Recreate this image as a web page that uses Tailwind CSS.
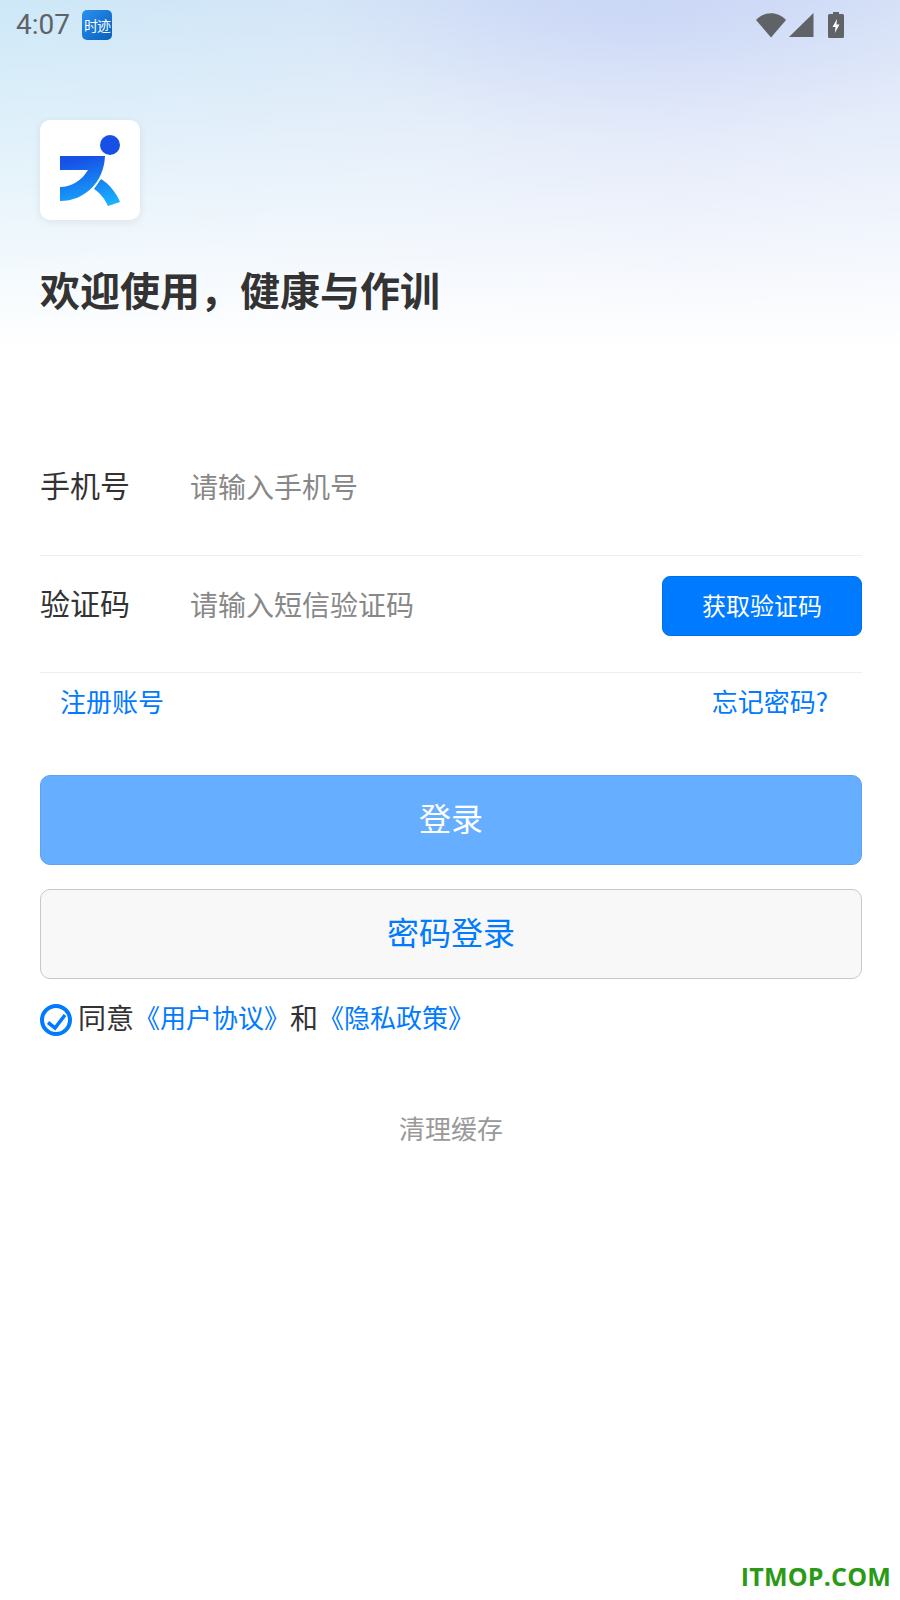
<!DOCTYPE html>
<html lang="zh-CN">
<head>
    <meta charset="UTF-8">
    <meta name="viewport" content="width=device-width, initial-scale=1.0">
    <title>健康与作训</title>
    <script src="https://cdn.jsdelivr.net/npm/@tailwindcss/browser@4"></script>
</head>
<body class="bg-white font-['Noto_Sans_CJK_SC','Noto_Sans',sans-serif]">
<div class="relative w-[900px] h-[1600px] overflow-hidden">

    <!-- header -->
    <header class="h-[380px] bg-[linear-gradient(to_bottom,transparent,#ffffff_92%),radial-gradient(ellipse_320px_130px_at_640px_20px,#c9d6f6,transparent),linear-gradient(to_right,#cde8f8,#d6e5f7_45%,#d4def6_75%,#d8e3f8)]">
        <div class="h-[50px] flex items-center pl-4 pr-[56px]">
            <span class="font-['Roboto',sans-serif] text-[28px] leading-none text-[#5f6368]">4:07</span>
            <div class="ml-[12px] w-[30px] h-[30px] rounded-[5px] bg-gradient-to-br from-[#2a90f0] to-[#0560bd] flex items-center justify-center text-white text-[14px] tracking-[-1px] leading-none">时迹</div>
            <div class="ml-auto flex items-center">
                <svg class="w-[30px] h-[26px]" viewBox="0 0 30 26"><path d="M0 8 C8 -1 22 -1 30 8 L15 25.500 Z" fill="#5f6368"/></svg>
                <svg class="ml-[3px] w-[25px] h-[26px]" viewBox="0 0 25 26"><path d="M0 25 L24.500 1 V25 Z" fill="#5f6368"/></svg>
                <svg class="ml-[14px] w-[16px] h-[26px]" viewBox="0 0 16 26"><path d="M5 0 H11 V2 H14.500 Q16 2 16 3.500 V24.500 Q16 26 14.500 26 H1.500 Q0 26 0 24.500 V3.500 Q0 2 1.500 2 H5 Z" fill="#5f6368"/><path d="M9 7 L4.500 15 H7.500 L6.800 21 L11.500 12.500 H8.500 Z" fill="#ffffff"/></svg>
            </div>
        </div>
        <div class="ml-10 mt-[70px] w-[100px] h-[100px] bg-white rounded-[10px] shadow-[0_2px_8px_rgba(0,0,0,0.08)]">
            <svg class="w-full h-full" viewBox="0 0 100 100">
                <defs>
                    <linearGradient id="logo" gradientUnits="userSpaceOnUse" x1="50" y1="36" x2="62" y2="88">
                        <stop offset="0" stop-color="#1650e6"/>
                        <stop offset="1" stop-color="#18b6ff"/>
                    </linearGradient>
                </defs>
                <circle cx="70" cy="25" r="10" fill="#1650e6"/>
                <path d="M20 36 H65 C64 62 45 81 20 81 V67 C32 67 42 60 48 50 H20 Z" fill="url(#logo)"/>
                <path d="M61 59 C69 64 76 72 80 82 L68 86 C65 79 60 73 54 69 Z" fill="url(#logo)"/>
            </svg>
        </div>
        <h1 class="ml-10 mt-[39px] text-[40px] leading-[60px] font-bold text-[#333333]">欢迎使用，健康与作训</h1>
    </header>

    <!-- form -->
    <main class="ml-10 w-[822px] mt-[60px]">
        <div class="h-[116px] flex items-center pb-[24px] border-b border-[#eeeeee]">
            <span class="w-[150px] mb-[2px] text-[30px] text-[#333333]">手机号</span>
            <span class="text-[28px] text-[#888888]">请输入手机号</span>
        </div>
        <div class="h-[117px] flex items-center pb-[20px] border-b border-[#eeeeee]">
            <span class="w-[150px] mb-[4px] text-[30px] text-[#333333]">验证码</span>
            <span class="text-[28px] text-[#888888]">请输入短信验证码</span>
            <button class="ml-auto self-start mt-[20px] w-[200px] h-[60px] pb-[2px] rounded-[8px] bg-[#007aff] border border-[#0070e8] text-white text-[24px]">获取验证码</button>
        </div>
        <div class="h-[59px] flex items-center justify-between pb-[4px] pl-[20px] pr-[34px] text-[26px] text-[#007aff]">
            <a>注册账号</a>
            <a>忘记密码?</a>
        </div>
        <button class="mt-[43px] block w-full h-[90px] pb-[6px] rounded-[10px] bg-[#66aeff] border border-[#5fa3ee] text-white text-[32px]">登录</button>
        <button class="mt-[24px] block w-full h-[90px] pb-[6px] rounded-[10px] bg-[#f8f8f8] border border-[#c8c8c8] text-[#007aff] text-[32px]">密码登录</button>
        <div class="mt-[21px] flex items-center h-[40px] text-[28px] text-[#333333]">
            <svg class="w-[32px] h-[32px] mr-[6px]" viewBox="0 0 32 32" fill="none" stroke="#007aff"><circle cx="16" cy="16" r="14" stroke-width="4"/><path d="M8 18.500 L15 24 L25 11" stroke-width="3.500"/></svg>
            <div class="flex items-center pb-[7px]">
                <span>同意</span><span class="text-[26px] text-[#007aff]">《用户协议》</span><span>和</span><span class="text-[26px] text-[#007aff]">《隐私政策》</span>
            </div>
        </div>
        <p class="mt-[68px] text-center text-[26px] leading-[40px] text-[#999999]">清理缓存</p>
    </main>

    <!-- watermark -->
    <div class="absolute right-[9px] bottom-[8px] font-['Open_Sans',sans-serif] font-bold text-[25px] tracking-[0.2px] leading-[32px] text-[#2a9a16]">ITMOP.COM</div>
</div>
</body>
</html>
